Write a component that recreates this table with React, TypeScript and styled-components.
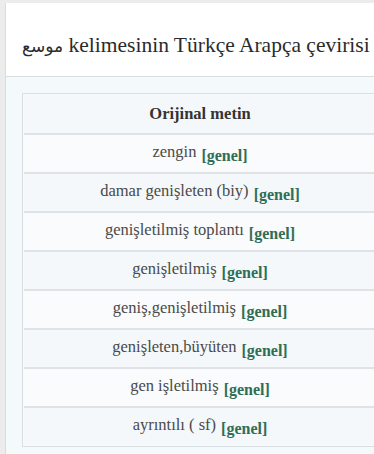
import React from "react";
import styled, { createGlobalStyle } from "styled-components";

const Global = createGlobalStyle`
  html, body { margin: 0; padding: 0; background: #ececec; }
  body { font-family: "Liberation Serif", "DejaVu Serif", serif; }
`;

const Page = styled.div`
  padding: 3px 0 0 5px;
  height: 451px;
  overflow: hidden;
`;

const Panel = styled.div`
  background: #ffffff;
  border-left: 1px solid #dcdcdc;
  height: 100%;
  overflow: hidden;
`;

const Header = styled.div`
  height: 74px;
  border-bottom: 1px solid #d8dde0;
  display: flex;
  align-items: flex-end;
  padding: 0 0 18px 16px;
  box-sizing: border-box;
`;

const Title = styled.h1`
  margin: 0;
  font-weight: normal;
  font-size: 21.5px;
  color: #2b2b2b;
  white-space: nowrap;
`;

const Arabic = styled.span`
  font-family: "DejaVu Sans", sans-serif;
  font-size: 17px;
`;

const Body = styled.div`
  background: #f4f9fc;
  padding: 16px 0 0 16px;
  height: 100%;
`;

const Table = styled.table`
  width: 356px;
  border: 1px solid #d9dee2;
  border-spacing: 0;
  border-collapse: separate;
  padding: 1px;
  background: #f7fafc;
`;

const Th = styled.th`
  height: 38px;
  padding: 0;
  font-size: 16.5px;
  font-weight: bold;
  color: #333;
  border-bottom: 2px solid #dfe3e6;
  background: #f5f8fa;
`;

const Td = styled.td<{ $alt: boolean }>`
  height: 37px;
  padding: 0;
  text-align: center;
  font-size: 16.5px;
  color: #4a4a4a;
  background: ${(p) => (p.$alt ? "#f4f8fa" : "#f9fbfc")};
  border-bottom: 2px solid #dfe3e6;
  tr:last-child > & { border-bottom: none; }
`;

const Tag = styled.span`
  display: inline-block;
  font-weight: bold;
  font-size: 16px;
  color: #2f6e55;
  vertical-align: -4px;
  margin-left: 5px;
`;

const rows = [
  "zengin",
  "damar genişleten (biy)",
  "genişletilmiş toplantı",
  "genişletilmiş",
  "geniş,genişletilmiş",
  "genişleten,büyüten",
  "gen işletilmiş",
  "ayrıntılı ( sf)",
];

export default function App() {
  return (
    <>
      <Global />
      <Page>
        <Panel>
          <Header>
            <Title>
              <Arabic>موسع</Arabic> kelimesinin Türkçe Arapça çevirisi
            </Title>
          </Header>
          <Body>
            <Table>
              <thead>
                <tr>
                  <Th>Orijinal metin</Th>
                </tr>
              </thead>
              <tbody>
                {rows.map((r, i) => (
                  <tr key={i}>
                    <Td $alt={i % 2 === 1}>
                      {r}
                      <Tag>[genel]</Tag>
                    </Td>
                  </tr>
                ))}
              </tbody>
            </Table>
          </Body>
        </Panel>
      </Page>
    </>
  );
}
